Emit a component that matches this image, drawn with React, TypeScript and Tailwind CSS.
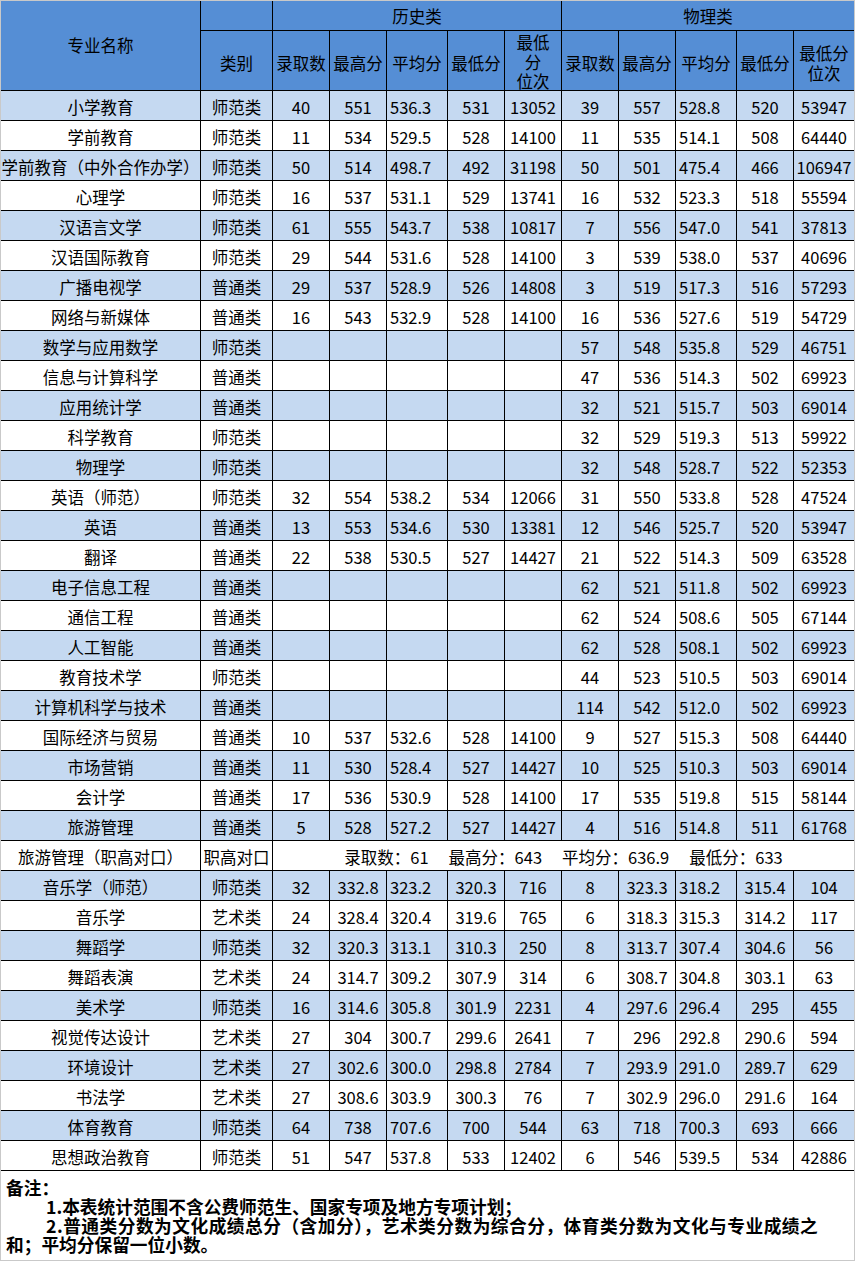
import React from 'react';

type Row = {
  name: string;
  kind: string;
  h: string[] | null;
  p: string[];
};

const rows: Row[] = [
  { name: '小学教育', kind: '师范类', h: ['40', '551', '536.3', '531', '13052'], p: ['39', '557', '528.8', '520', '53947'] },
  { name: '学前教育', kind: '师范类', h: ['11', '534', '529.5', '528', '14100'], p: ['11', '535', '514.1', '508', '64440'] },
  { name: '学前教育（中外合作办学）', kind: '师范类', h: ['50', '514', '498.7', '492', '31198'], p: ['50', '501', '475.4', '466', '106947'] },
  { name: '心理学', kind: '师范类', h: ['16', '537', '531.1', '529', '13741'], p: ['16', '532', '523.3', '518', '55594'] },
  { name: '汉语言文学', kind: '师范类', h: ['61', '555', '543.7', '538', '10817'], p: ['7', '556', '547.0', '541', '37813'] },
  { name: '汉语国际教育', kind: '师范类', h: ['29', '544', '531.6', '528', '14100'], p: ['3', '539', '538.0', '537', '40696'] },
  { name: '广播电视学', kind: '普通类', h: ['29', '537', '528.9', '526', '14808'], p: ['3', '519', '517.3', '516', '57293'] },
  { name: '网络与新媒体', kind: '普通类', h: ['16', '543', '532.9', '528', '14100'], p: ['16', '536', '527.6', '519', '54729'] },
  { name: '数学与应用数学', kind: '师范类', h: null, p: ['57', '548', '535.8', '529', '46751'] },
  { name: '信息与计算科学', kind: '普通类', h: null, p: ['47', '536', '514.3', '502', '69923'] },
  { name: '应用统计学', kind: '普通类', h: null, p: ['32', '521', '515.7', '503', '69014'] },
  { name: '科学教育', kind: '师范类', h: null, p: ['32', '529', '519.3', '513', '59922'] },
  { name: '物理学', kind: '师范类', h: null, p: ['32', '548', '528.7', '522', '52353'] },
  { name: '英语（师范）', kind: '师范类', h: ['32', '554', '538.2', '534', '12066'], p: ['31', '550', '533.8', '528', '47524'] },
  { name: '英语', kind: '普通类', h: ['13', '553', '534.6', '530', '13381'], p: ['12', '546', '525.7', '520', '53947'] },
  { name: '翻译', kind: '普通类', h: ['22', '538', '530.5', '527', '14427'], p: ['21', '522', '514.3', '509', '63528'] },
  { name: '电子信息工程', kind: '普通类', h: null, p: ['62', '521', '511.8', '502', '69923'] },
  { name: '通信工程', kind: '普通类', h: null, p: ['62', '524', '508.6', '505', '67144'] },
  { name: '人工智能', kind: '普通类', h: null, p: ['62', '528', '508.1', '502', '69923'] },
  { name: '教育技术学', kind: '师范类', h: null, p: ['44', '523', '510.5', '503', '69014'] },
  { name: '计算机科学与技术', kind: '普通类', h: null, p: ['114', '542', '512.0', '502', '69923'] },
  { name: '国际经济与贸易', kind: '普通类', h: ['10', '537', '532.6', '528', '14100'], p: ['9', '527', '515.3', '508', '64440'] },
  { name: '市场营销', kind: '普通类', h: ['11', '530', '528.4', '527', '14427'], p: ['10', '525', '510.3', '503', '69014'] },
  { name: '会计学', kind: '普通类', h: ['17', '536', '530.9', '528', '14100'], p: ['17', '535', '519.8', '515', '58144'] },
  { name: '旅游管理', kind: '普通类', h: ['5', '528', '527.2', '527', '14427'], p: ['4', '516', '514.8', '511', '61768'] },
  { name: '旅游管理（职高对口）', kind: '职高对口', h: null, p: [] },
  { name: '音乐学（师范）', kind: '师范类', h: ['32', '332.8', '323.2', '320.3', '716'], p: ['8', '323.3', '318.2', '315.4', '104'] },
  { name: '音乐学', kind: '艺术类', h: ['24', '328.4', '320.4', '319.6', '765'], p: ['6', '318.3', '315.3', '314.2', '117'] },
  { name: '舞蹈学', kind: '师范类', h: ['32', '320.3', '313.1', '310.3', '250'], p: ['8', '313.7', '307.4', '304.6', '56'] },
  { name: '舞蹈表演', kind: '艺术类', h: ['24', '314.7', '309.2', '307.9', '314'], p: ['6', '308.7', '304.8', '303.1', '63'] },
  { name: '美术学', kind: '师范类', h: ['16', '314.6', '305.8', '301.9', '2231'], p: ['4', '297.6', '296.4', '295', '455'] },
  { name: '视觉传达设计', kind: '艺术类', h: ['27', '304', '300.7', '299.6', '2641'], p: ['7', '296', '292.8', '290.6', '594'] },
  { name: '环境设计', kind: '艺术类', h: ['27', '302.6', '300.0', '298.8', '2784'], p: ['7', '293.9', '291.0', '289.7', '629'] },
  { name: '书法学', kind: '艺术类', h: ['27', '308.6', '303.9', '300.3', '76'], p: ['7', '302.9', '296.0', '291.6', '164'] },
  { name: '体育教育', kind: '师范类', h: ['64', '738', '707.6', '700', '544'], p: ['63', '718', '700.3', '693', '666'] },
  { name: '思想政治教育', kind: '师范类', h: ['51', '547', '537.8', '533', '12402'], p: ['6', '546', '539.5', '534', '42886'] },
];

const head = 'bg-[#558ED5] flex items-center justify-center text-center';
const sub = ['录取数', '最高分', '平均分', '最低分'];

function Cells({ vals, bg }: { vals: string[] | null; bg: string }) {
  const list = vals ?? ['', '', '', '', ''];
  return (
    <>
      {list.map((v, i) => (
        <div
          key={i}
          className={`${bg} h-[29px] flex items-center pt-[3px] whitespace-nowrap ${i === 2 ? 'justify-start pl-[3px]' : 'justify-center'}`}
        >
          {v}
        </div>
      ))}
    </>
  );
}

export default function App() {
  return (
    <div className="w-[855px] h-[1261px] border border-[#c9c9c9] bg-white text-black font-['Noto_Sans_CJK_SC',sans-serif] text-[16.5px] leading-[20px] overflow-hidden">
      <div className="grid grid-cols-[199px_71px_56px_56px_60px_56px_56px_56px_56px_60px_56px_60px] gap-px bg-black">
        {/* header */}
        <div className={`${head} row-span-2 pb-[2px]`}>专业名称</div>
        <div className="bg-[#558ED5] h-[29px]" />
        <div className={`${head} col-span-5 h-[29px] pt-[1px]`}>历史类</div>
        <div className={`${head} col-span-5 h-[29px] pt-[1px]`}>物理类</div>

        <div className={`${head} h-[59px] pt-[4px]`}>类别</div>
        {sub.map((s) => (
          <div key={'h' + s} className={`${head} h-[59px] pt-[4px] whitespace-nowrap`}>{s}</div>
        ))}
        <div className={`${head} h-[59px] pt-[4px] leading-[19.5px]`}>
          最低<br />分<br />位次
        </div>
        {sub.map((s) => (
          <div key={'p' + s} className={`${head} h-[59px] pt-[4px] whitespace-nowrap`}>{s}</div>
        ))}
        <div className={`${head} h-[59px] pt-[4px] leading-[20px]`}>
          最低分<br />位次
        </div>

        {/* body */}
        {rows.map((r, i) => {
          const bg = i % 2 === 0 ? 'bg-[#C5D9F1]' : 'bg-white';
          const base = `${bg} h-[29px] flex items-center justify-center pt-[3px] whitespace-nowrap`;
          if (r.kind === '职高对口') {
            return (
              <React.Fragment key={r.name}>
                <div className={base}>{r.name}</div>
                <div className={base}>{r.kind}</div>
                <div className={`${base} col-span-10 gap-[20px]`}>
                  <span>录取数：61</span>
                  <span>最高分：643</span>
                  <span>平均分：636.9</span>
                  <span>最低分：633</span>
                </div>
              </React.Fragment>
            );
          }
          return (
            <React.Fragment key={r.name}>
              <div className={base}>{r.name}</div>
              <div className={base}>{r.kind}</div>
              <Cells vals={r.h} bg={bg} />
              <Cells vals={r.p} bg={bg} />
            </React.Fragment>
          );
        })}
      </div>

      {/* notes */}
      <div className="border-t border-black h-[90px] pt-[7px] pl-[5px] text-[17.7px] font-bold leading-[19px]">
        <div>备注：</div>
        <div className="pl-[40px]">1.本表统计范围不含公费师范生、国家专项及地方专项计划；</div>
        <div className="pl-[40px] whitespace-nowrap tracking-[0.5px]">2.普通类分数为文化成绩总分（含加分），艺术类分数为综合分，体育类分数为文化与专业成绩之</div>
        <div>和；平均分保留一位小数。</div>
      </div>
    </div>
  );
}
